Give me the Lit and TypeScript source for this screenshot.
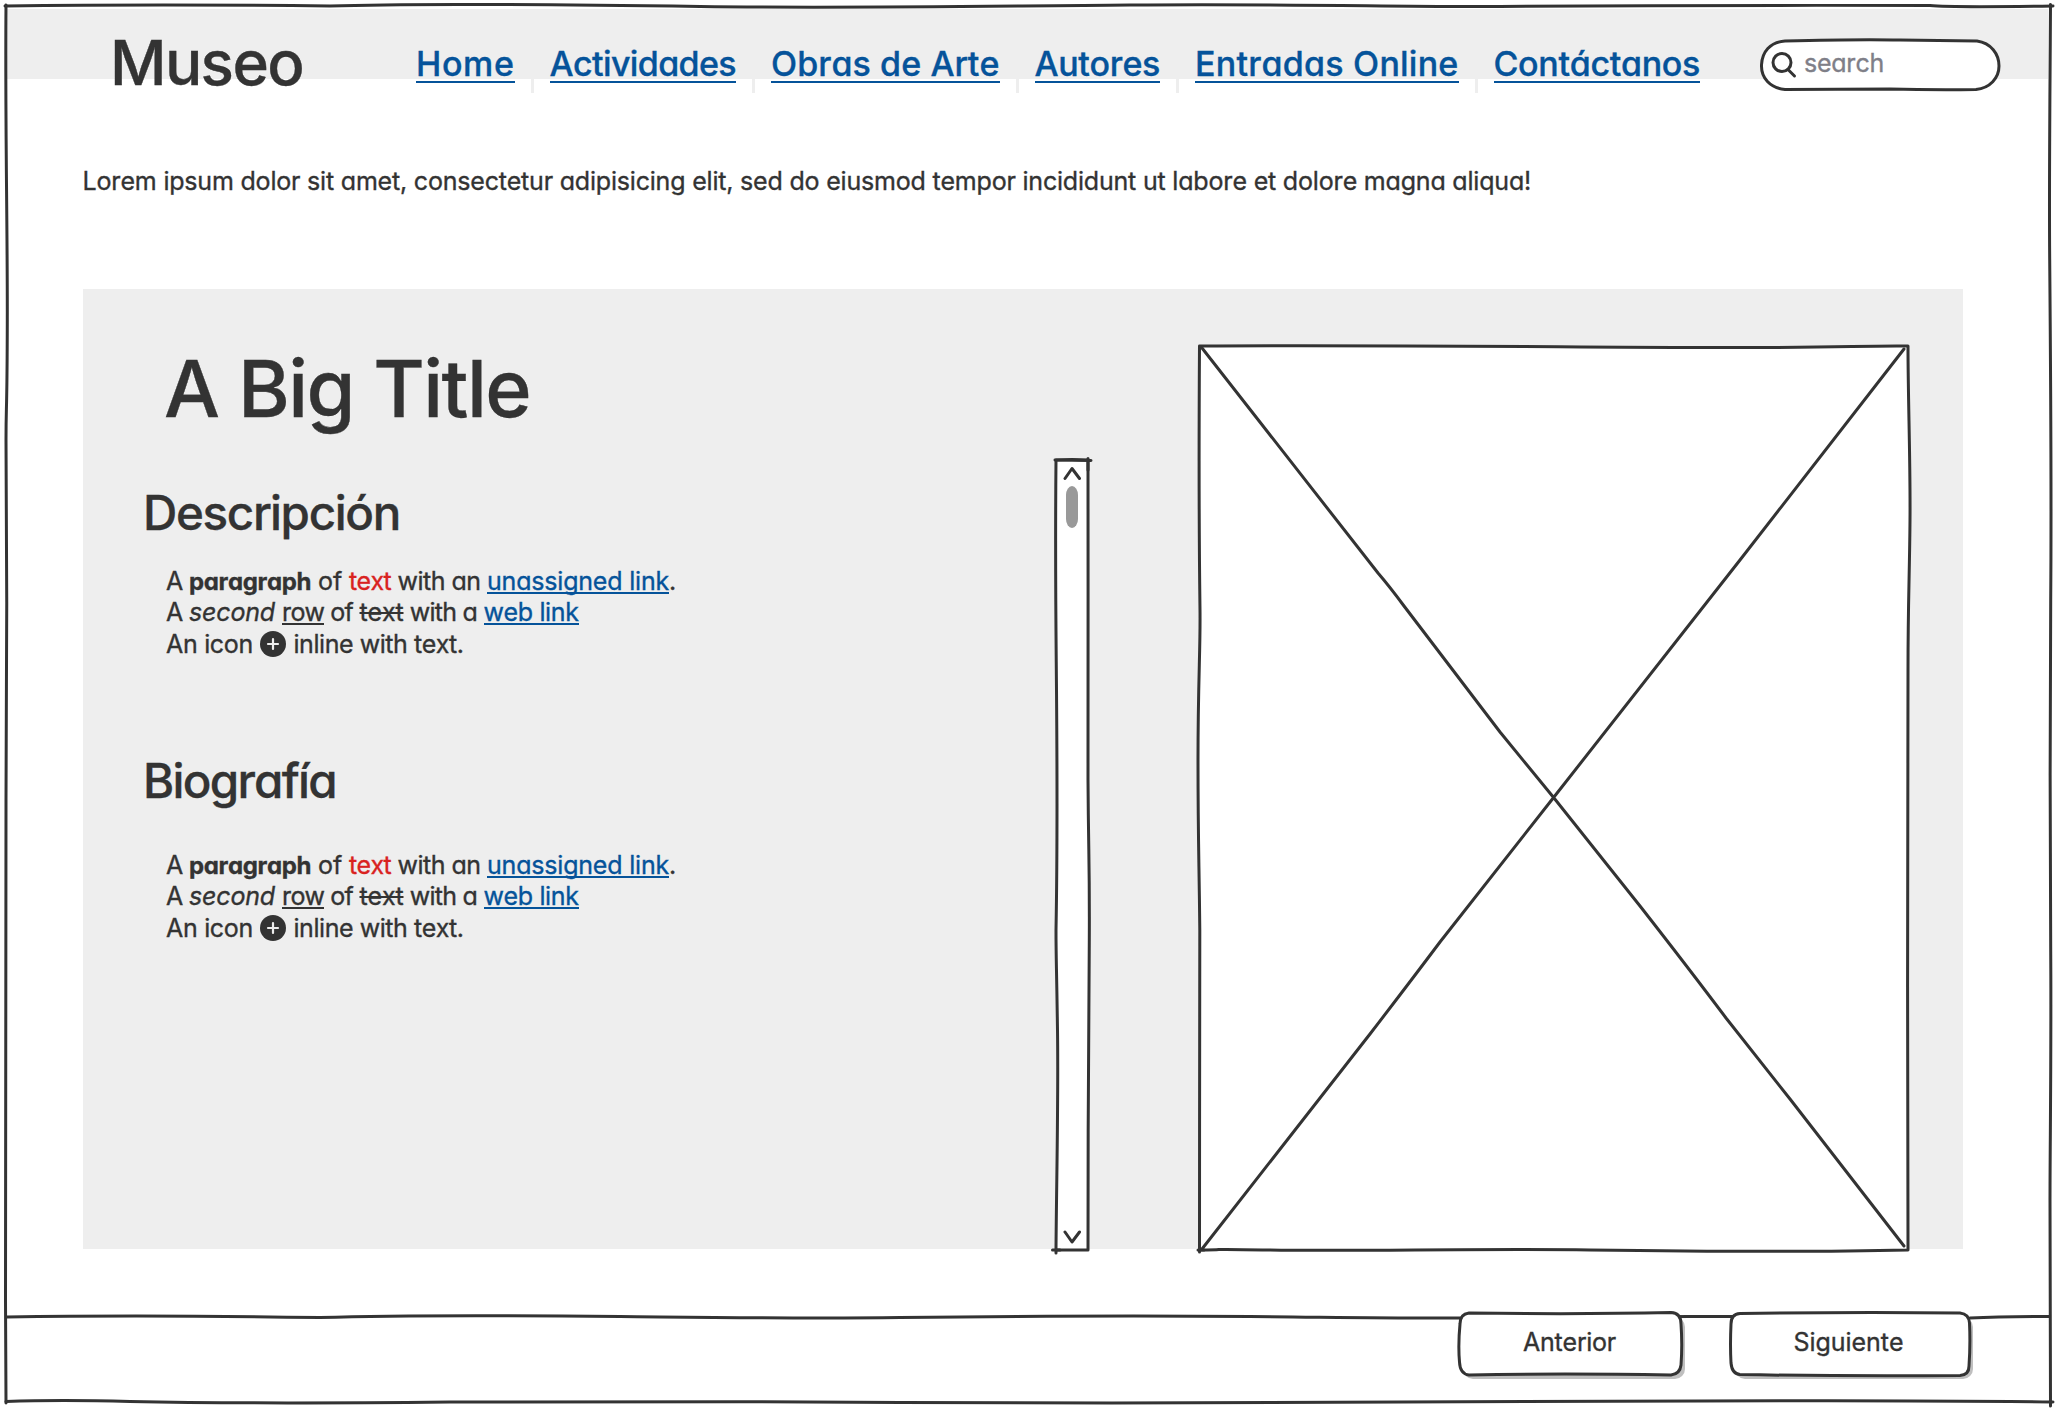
import { LitElement, html, svg, css } from "lit";
import { customElement, property } from "lit/decorators.js";

/** A run of text whose letters are spaced so that it fills a given width. */
@customElement("fit-text")
class FitText extends LitElement {
  @property() text = "";
  @property({ type: Number }) width = 0;
  static styles = css`
    :host { display: inline-block; white-space: pre; }
    .run { display: inline-block; text-decoration: inherit; }
  `;
  private fit() {
    const run = this.renderRoot.querySelector(".run") as HTMLElement;
    run.style.letterSpacing = "0px";
    const natural = run.getBoundingClientRect().width;
    run.style.letterSpacing = `${(this.width - natural) / this.text.length}px`;
  }
  updated() {
    this.fit();
    document.fonts.ready.then(() => this.fit());
  }
  render() {
    return html`<span class="run">${this.text}</span>`;
  }
}

@customElement("app-root")
class AppRoot extends LitElement {
  static styles = css`
    :host {
      display: block; position: relative; box-sizing: border-box;
      width: 2056px; height: 1408px; overflow: hidden; background: #fff; color: #333;
      font-family: Inter, "Open Sans", sans-serif; font-size: 25px; line-height: 31px;
      font-feature-settings: "cv11", "calt" 0; font-kerning: none;
      -webkit-text-stroke: 0.35px currentColor;
      padding: 9px 7px 0 7px;
    }
    .sketch { position: absolute; left: 0; top: 0; pointer-events: none; }
    .line { fill: none; stroke: #333; stroke-width: 3; stroke-linecap: round; stroke-linejoin: round; }
    .fillW { fill: #fff; stroke: #333; stroke-width: 3; stroke-linejoin: round; }
    .shade { fill: #bfbfbf; }
    .header { display: flex; height: 70px; background: #eee; width: 2041px; }
    .header > * { flex-shrink: 0; }
    .brand { font-size: 62px; line-height: 70px; font-weight: 500; margin: 19px 0 0 103px; width: 306px; height: 70px; }
    .nav { display: flex; color: #05539a; font-size: 34px; line-height: 40px; height: 84px; width: 1344px; }
    .link { flex-shrink: 0; height: 32px; margin-top: 39.5px; border-bottom: 2.6px solid #05539a; line-height: 29px; font-weight: 450; }
    .sep { flex-shrink: 0; width: 3px; height: 84px; background: #eee; margin: 0 16px 0 16px; }
    .search { display: flex; align-items: center; position: relative; width: 240px; height: 52px; margin-top: 30px; color: #7f7f88; }
    .glass { position: absolute; left: 0; top: 0; }
    .query { position: relative; margin-left: 44px; top: -2px; }
    .lorem { margin: 87px 0 0 75.5px; height: 31px; }
    .panel { box-sizing: border-box; background: #eee; width: 1880px; height: 960px; margin: 92px 0 0 76px; padding: 50.5px 0 0 60px; }
    .title { font-size: 79px; line-height: 96px; font-weight: 500; margin-left: 21px; height: 96px; }
    .h2 { font-size: 47.5px; line-height: 58px; font-weight: 450; height: 58px; }
    .d { margin-top: 48px; }
    .b { margin-top: 92px; }
    .para { margin: 24px 0 0 23px; height: 94px; }
    .b + .para { margin-top: 40px; }
    .row { display: flex; height: 31.7px; }
    .bold { font-weight: 700; font-size: 24px; }
    .red { color: #d9221f; }
    .it { font-style: italic; }
    .u { height: 26px; border-bottom: 2px solid #333; }
    .strike { text-decoration: line-through 2px; }
    .a { height: 26px; color: #05539a; border-bottom: 2px solid #05539a; }
    .plus { width: 26px; height: 26px; margin: 2px 7.5px 0 7px; }
    .footer { display: flex; height: 62px; margin: 64px 0 0 1452px; gap: 50px; line-height: 59px; }
    .btn { position: relative; text-align: center; }
    .prev { width: 221px; }
    .next { width: 237px; }
  `;

  private para() {
    return html`<div class="para">
      <div class="row">
        <fit-text .text=${"A "} .width=${23}></fit-text><fit-text class="bold" .text=${"paragraph"} .width=${122}></fit-text><fit-text .text=${" of "} .width=${38}></fit-text><fit-text class="red" .text=${"text"} .width=${42}></fit-text><fit-text .text=${" with an "} .width=${96}></fit-text><fit-text class="a" .text=${"unassigned link"} .width=${182}></fit-text><fit-text .text=${"."} .width=${3}></fit-text>
      </div>
      <div class="row">
        <fit-text .text=${"A "} .width=${23}></fit-text><fit-text class="it" .text=${"second"} .width=${86}></fit-text><fit-text .text=${" "} .width=${7}></fit-text><fit-text class="u" .text=${"row"} .width=${42}></fit-text><fit-text .text=${" of "} .width=${35.5}></fit-text><fit-text class="strike" .text=${"text"} .width=${44}></fit-text><fit-text .text=${" with a "} .width=${80}></fit-text><fit-text class="a" .text=${"web link"} .width=${95}></fit-text>
      </div>
      <div class="row">
        <fit-text .text=${"An icon"} .width=${87}></fit-text>
        <svg class="plus" viewBox="0 0 26 26"><circle cx="13" cy="13" r="13" fill="#333" /><path d="M13 8V18M8 13H18" stroke="#eee" stroke-width="2.2" stroke-linecap="round" /></svg>
        <fit-text .text=${"inline with text."} .width=${170}></fit-text>
      </div>
    </div>`;
  }

  render() {
    const links: [string, number][] = [["Home", 98.5], ["Actividades", 186.500], ["Obras de Arte", 228.5], ["Autores", 125.5], ["Entradas Online", 263.500], ["Contáctanos", 206.500]];
    return html`
      <div class="header">
        <div class="brand"><fit-text .text=${"Museo"} .width=${193}></fit-text></div>
        <div class="nav">
          ${links.map(([t, w], i) => html`${i ? html`<div class="sep"></div>` : ""}<fit-text class="link" .text=${t} .width=${w}></fit-text>`)}
        </div>
        <div class="search">
          <svg class="glass" width="240" height="52" viewBox="1760 39 240 52" overflow="visible">
            <path class="fillW" d="M1785 41Q1860 39 1900 40L1977 41C1991 43 1999 54 1999 66C1999 78 1990 88 1976 89.500Q1930 90 1890 89L1785 89.500C1770 88 1761 78 1761.500 65C1762 52 1770 42 1785 41Z" />
            <ellipse class="line" cx="1782" cy="62.500" rx="9" ry="9" />
            <path class="line" d="M1788 69.500L1794.500 76" />
          </svg>
          <fit-text class="query" .text=${"search"} .width=${80}></fit-text>
        </div>
      </div>
      <div class="lorem"><fit-text .text=${"Lorem ipsum dolor sit amet, consectetur adipisicing elit, sed do eiusmod tempor incididunt ut labore et dolore magna aliqua!"} .width=${1448.5}></fit-text></div>
      <div class="panel">
        <div class="title"><fit-text .text=${"A Big Title"} .width=${366}></fit-text></div>
        <div class="h2 d"><fit-text .text=${"Descripción"} .width=${257}></fit-text></div>
        ${this.para()}
        <div class="h2 b"><fit-text .text=${"Biografía"} .width=${193}></fit-text></div>
        ${this.para()}
      </div>
      <svg class="sketch" width="2056" height="1408" viewBox="0 0 2056 1408">
        ${svg`
        <path class="line" d="M5 6Q160 4 330 6C400 3.500 560 4.500 700 6.500S950 6.500 1130 5S1400 7.500 1500 6.500Q1700 5 1930 5.500Q1950 7.500 2053 6" />
        <path class="line" d="M6 5C5 120 7.500 220 7.300 320S6 400 6 440C7 550 7 700 6 800S6.500 1200 5.500 1300Q6 1360 6 1403" />
        <path class="line" d="M2050.500 4.500C2050 100 2049 180 2049.700 260S2051.500 500 2050.700 600S2050 850 2050.700 950S2050 1150 2050 1200T2050.500 1406" />
        <path class="line" d="M6 1401.500Q60 1399.500 130 1401.500C250 1404 350 1403 450 1402S750 1401.500 900 1402.500S1300 1403 1400 1402T1700 1401Q1900 1400 2053 1402" />
        <path class="line" d="M7 1317C130 1315 220 1316 320 1317.500C420 1314.500 520 1315.500 620 1316.500S800 1318.700 900 1317.500S1150 1315.500 1250 1316.500S1400 1318.500 1460 1318L1690 1316.500L1735 1316.500M1970 1318Q2000 1316.500 2049 1316.500" />
        <path class="fillW" d="M1056 460Q1072 459 1088 460C1088.500 560 1087.500 700 1088 780S1089.700 860 1089.300 940S1087.700 1150 1088 1250L1056 1250C1056.500 1180 1058.500 1100 1057.500 1030S1056 960 1056 930C1057.500 850 1057 750 1056.500 690S1055 560 1056 460Z" />
        <path class="line" d="M1055 460L1091 460.500M1088 458.500V470M1056 1250V1253M1052.500 1250H1060" />
        <path class="line" d="M1065 478.500L1072 468.500L1079.500 478.500M1065 1232L1072 1242L1079.500 1232" />
        <rect x="1066" y="486" width="12" height="42" rx="6" ry="9" fill="#999" />
        <path class="fillW" d="M1199.500 346C1400 345 1550 347 1700 347.500S1850 345.500 1908 346C1908 400 1910.500 460 1910 520S1908 600 1908 670S1907 1100 1908 1250C1800 1252.500 1700 1251.500 1590 1250S1350 1251.500 1270 1250S1240 1250 1199.500 1250C1199 1150 1200.500 1000 1199.800 930S1198 840 1198 760S1200.500 650 1200 610S1198.500 500 1199.500 346Z" />
        <path class="line" d="M1199.500 1252V1246M1198 1250H1204" />
        <path class="line" d="M1202 348L1378 573Q1390 587 1404 606L1500 732L1554 798L1640 906Q1690 970 1726 1018L1790 1099L1904 1246M1904 349L1740 560L1554 797L1440 942Q1410 982 1370 1034L1202 1249" />
        <rect class="shade" x="1463" y="1317" width="222" height="62" rx="10" />
        <rect class="shade" x="1735" y="1317" width="238" height="62" rx="10" />
        <path class="fillW" d="M1469 1313Q1580 1314.500 1671 1312.500Q1681 1313 1681 1324Q1682.500 1345 1681 1365Q1680 1374 1671 1375Q1560 1373 1469 1375Q1460 1374 1459.500 1362Q1458 1345 1460 1324Q1460 1314 1469 1313Z" />
        <path class="fillW" d="M1740 1313.500Q1850 1312 1960 1313Q1969 1314 1969.500 1323Q1970.500 1345 1969 1366Q1969 1375 1960 1375.500Q1850 1376.500 1740 1374.500Q1732 1374 1731 1363Q1730 1345 1731 1324Q1731 1314 1740 1313.500Z" />
        `}
      </svg>
      <div class="footer">
        <div class="btn prev"><fit-text .text=${"Anterior"} .width=${93}></fit-text></div>
        <div class="btn next"><fit-text .text=${"Siguiente"} .width=${110}></fit-text></div>
      </div>
    `;
  }
}
